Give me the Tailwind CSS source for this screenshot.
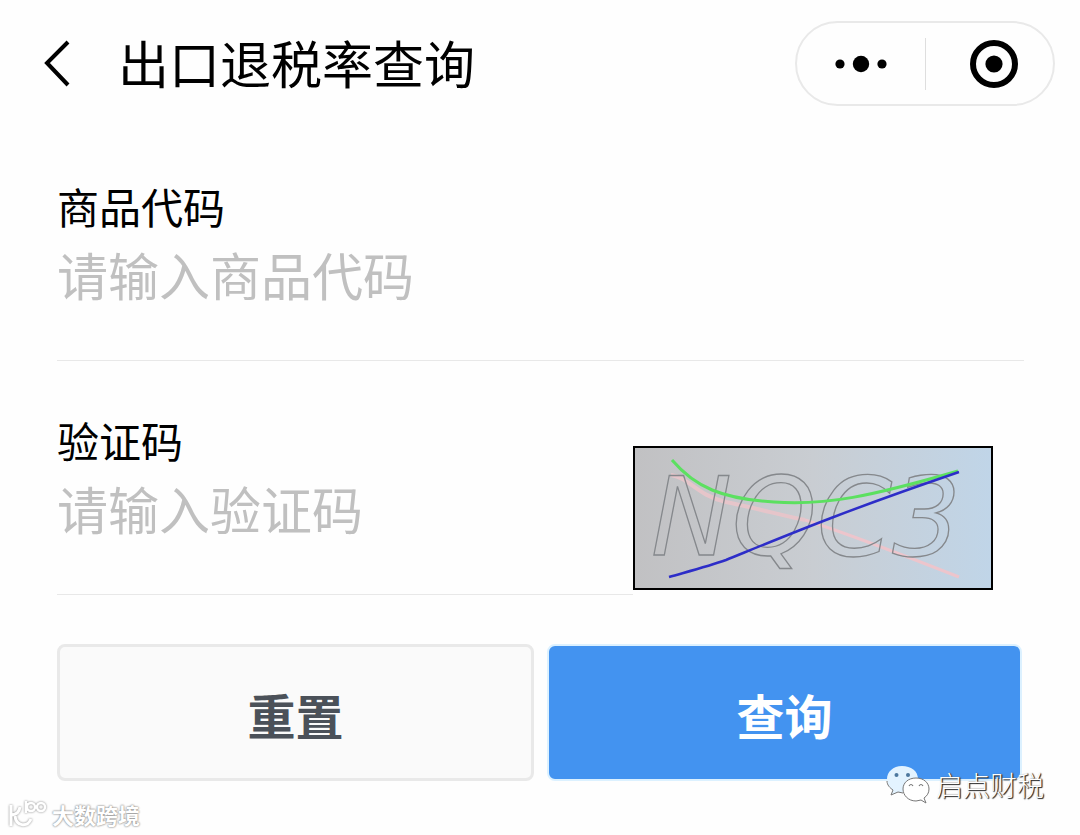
<!DOCTYPE html>
<html lang="zh-CN">
<head>
<meta charset="utf-8">
<meta name="viewport" content="width=device-width, initial-scale=1">
<title>出口退税率查询</title>
<script src="https://cdn.jsdelivr.net/npm/@tailwindcss/browser@4"></script>
</head>
<body class="relative min-h-screen overflow-x-hidden bg-[#fefefe] font-['Noto_Sans_CJK_SC',sans-serif] text-black">
  <header class="flex items-center pt-[21px] pr-[25px] pl-10">
    <button type="button" aria-label="返回" class="mr-[38px] flex h-14 w-10 items-center">
      <svg class="h-12 w-8" viewBox="0 0 32 48" fill="none" stroke="#000" stroke-width="4"><path d="M28 2 7 23 28 45"/></svg>
    </button>
    <h1 class="flex-1 pb-1 text-[51px] leading-[60px] whitespace-nowrap">出口退税率查询</h1>
    <div class="flex h-[85px] w-[260px] items-center rounded-full border-2 border-[#e9e9e9]">
      <button type="button" aria-label="更多" class="flex h-full w-32 items-center justify-center">
        <svg class="h-5 w-[52px]" viewBox="0 0 52 20"><circle cx="5" cy="10" r="4.6"/><circle cx="26" cy="10" r="8.2"/><circle cx="47" cy="10" r="4.6"/></svg>
      </button>
      <span class="h-[52px] w-px bg-[#dedede]"></span>
      <button type="button" aria-label="关闭" class="flex h-full flex-1 items-center justify-center pl-2">
        <svg class="size-12" viewBox="0 0 48 48"><circle cx="24" cy="24" r="21" fill="none" stroke="#000" stroke-width="6"/><circle cx="24" cy="24" r="8.6"/></svg>
      </button>
    </div>
  </header>

  <main>
    <form class="pr-14 pl-[57px]">
      <div class="border-b border-[#e8e8e8] pt-[70px] pb-12">
        <label for="code" class="block text-[42px] leading-[60px]">商品代码</label>
        <input id="code" type="text" placeholder="请输入商品代码" class="block h-[76px] w-full bg-transparent text-[51px] outline-none placeholder:text-[#c0c0c0]">
      </div>
      <div class="flex items-end">
        <div class="min-w-0 flex-1 border-b border-[#e8e8e8] pt-[49px] pb-12">
          <label for="captcha" class="block text-[42px] leading-[60px]">验证码</label>
          <input id="captcha" type="text" placeholder="请输入验证码" class="block h-[76px] w-full bg-transparent text-[51px] outline-none placeholder:text-[#c0c0c0]">
        </div>
        <button type="button" aria-label="刷新验证码" class="mr-[31px] mb-[5px] h-36 w-[360px] shrink-0 border-2 border-black bg-linear-to-r from-[#c1c1c3] via-[#c9cdd2] to-[#c0d5e8]">
          <svg class="block h-full w-full" viewBox="0 0 356 140" fill="none">
            <path d="M36 27C55 30 61 47 91 54C125 61 145 67 170 72" stroke="#e6c5ca" stroke-width="4"/>
            <path d="M170 72C205 83 245 98 324 129" stroke="#edc5cc" stroke-width="3"/>
            <text x="16" y="107" font-family="DejaVu Sans" font-style="italic" font-size="108" stroke="#85888c" stroke-width="1.3">NQC3</text>
            <path d="M37 12C60 39 87 51 139 54C190 58 237 48 323 23" stroke="#5ce060" stroke-width="3"/>
            <path d="M34 129C55 123 74 118 91 112C150 88 204 65 324 24" stroke="#2d2dc8" stroke-width="2.5"/>
          </svg>
        </button>
      </div>
      <div class="flex gap-[13px] pt-[49px] pr-0.5">
        <button type="reset" class="h-[137px] flex-1 rounded-lg border-3 border-[#e9e9e9] bg-[#fafafa] pt-0.5 text-[48px] font-bold text-[#4b5159]">重置</button>
        <button type="submit" class="h-[137px] flex-1 rounded-lg border-2 border-[#dcf1ff] bg-[#4393f0] pt-0.5 text-[48px] font-bold text-white">查询</button>
      </div>
    </form>
  </main>

  <div class="absolute right-9 bottom-[30px] flex items-center gap-1.5">
    <svg class="h-10 w-11" viewBox="0 0 44 40">
      <path d="M16 1C7 1 1 7 1 14c0 5 3 9 6 11l-2 5 7-3c12 2 20-5 20-13S25 1 16 1Z" fill="#e3f3ff"/>
      <path d="M1 16c0 4 3 7 6 9l-2 5 7-3 5 1" fill="none" stroke="#777" stroke-width="1"/>
      <circle cx="10.500" cy="10" r="2" fill="#4d789e"/><circle cx="22" cy="10" r="2" fill="#4d789e"/>
      <path d="M30 13c-8 0-13 5-13 11s5 12 13 12l5-1 5 3-2-5c3-2 5-5 5-9 0-6-5-11-13-11Z" fill="#fff" stroke="#777" stroke-width="1"/>
      <path d="M23 21q2-3 4 0m6 0q2-3 4 0" fill="none" stroke="#777" stroke-width="1.2"/>
    </svg>
    <span class="text-[27px] leading-9 font-light text-white [text-shadow:1px_1px_1px_#222,1px_0_1px_#555]">启点财税</span>
  </div>

  <div class="absolute bottom-[7px] left-2 flex items-center gap-1">
    <svg class="h-7 w-10 drop-shadow-[0_0_1px_#888]" viewBox="0 0 40 28" fill="none" stroke="#fff" stroke-width="3">
      <path d="M3 5v21M4 15q7-1 8-8M7 16c1 10 12 12 16 3"/>
      <path d="M18 1v12M19 7a4 4 0 1 0 8 0 4 4 0 1 0-8 0M29 7a4 4 0 1 0 8 0 4 4 0 1 0-8 0" stroke-width="2.500"/>
    </svg>
    <span class="text-[22px] leading-7 font-bold text-white [text-shadow:0_0_2px_#888,0_0_2px_#999]">大数跨境</span>
  </div>
</body>
</html>
